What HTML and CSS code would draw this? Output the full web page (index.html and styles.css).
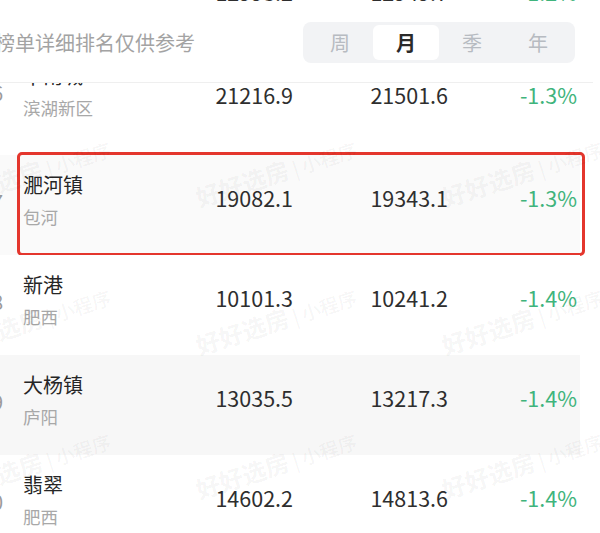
FILE: index.html
```html
<!DOCTYPE html>
<html lang="zh-CN">
<head>
    <meta charset="UTF-8">
    <meta name="viewport" content="width=device-width, initial-scale=1.0">
    <title>榜单详细排名</title>
    <link rel="stylesheet" href="styles.css">
</head>
<body>
    <!-- row scrolled away under the header -->
    <div class="peek">
        <div class="row shift-peek">
            <div class="name-cell"></div>
            <div class="num">12993.2</div>
            <div class="num">12949.7</div>
            <div class="pct">-1.2%</div>
        </div>
    </div>

    <div class="header">
        <div class="tip">榜单详细排名仅供参考</div>
        <div class="tabs">
            <span class="tab">周</span>
            <span class="tab active">月</span>
            <span class="tab">季</span>
            <span class="tab">年</span>
        </div>
    </div>

    <div class="rows">
        <div class="cut">
            <div class="row shift-cut">
                <div class="name-cell lift"><span class="rank">6</span><div><div class="name">华南城</div><div class="area">滨湖新区</div></div></div>
                <div class="num">21216.9</div>
                <div class="num">21501.6</div>
                <div class="pct">-1.3%</div>
            </div>
        </div>

        <div class="row shade-light">
            <div class="name-cell"><span class="rank">7</span><div><div class="name">淝河镇</div><div class="area">包河</div></div></div>
            <div class="num">19082.1</div>
            <div class="num">19343.1</div>
            <div class="pct">-1.3%</div>
            <div class="highlight"></div>
        </div>

        <div class="row">
            <div class="name-cell"><span class="rank">8</span><div><div class="name">新港</div><div class="area">肥西</div></div></div>
            <div class="num">10101.3</div>
            <div class="num">10241.2</div>
            <div class="pct">-1.4%</div>
        </div>

        <div class="row shade">
            <div class="name-cell"><span class="rank">9</span><div><div class="name">大杨镇</div><div class="area">庐阳</div></div></div>
            <div class="num">13035.5</div>
            <div class="num">13217.3</div>
            <div class="pct">-1.4%</div>
        </div>

        <div class="row">
            <div class="name-cell"><span class="rank">0</span><div><div class="name">翡翠</div><div class="area">肥西</div></div></div>
            <div class="num">14602.2</div>
            <div class="num">14813.6</div>
            <div class="pct">-1.4%</div>
        </div>

        <!-- watermark tiles -->
        <div class="marks">
            <span class="mark band-a col-a"><b>好好选房</b> | 小程序</span>
            <span class="mark band-a col-b"><b>好好选房</b> | 小程序</span>
            <span class="mark band-a col-c"><b>好好选房</b> | 小程序</span>
            <span class="mark band-b col-a"><b>好好选房</b> | 小程序</span>
            <span class="mark band-b col-b"><b>好好选房</b> | 小程序</span>
            <span class="mark band-b col-c"><b>好好选房</b> | 小程序</span>
            <span class="mark band-c col-a"><b>好好选房</b> | 小程序</span>
            <span class="mark band-c col-b"><b>好好选房</b> | 小程序</span>
            <span class="mark band-c col-c"><b>好好选房</b> | 小程序</span>
        </div>
    </div>
</body>
</html>
```

FILE: styles.css
```css
/* Basic Styles */
body {
    margin: 0;
    width: 600px;
    height: 533px;
    overflow: hidden;
    background-color: #fff;
    font-family: "Noto Sans CJK SC", "Noto Sans", sans-serif;
    color: #2b2b2b;
}

/* Partly hidden rows */
.peek {
    height: 9px;
    overflow: hidden;
}

.shift-peek {
    margin-top: -51px;
}

.cut {
    height: 72px;
    overflow: hidden;
}

.shift-cut {
    margin-top: -31px;
}

.lift {
    margin-top: -6px;
}

/* Header */
.header {
    width: 593px;
    height: 74px;
    display: flex;
    align-items: center;
    justify-content: space-between;
    padding: 0 18px 6px 0;
    box-sizing: border-box;
    border-bottom: 1px solid #efefef;
}

.tip {
    margin-left: -5px;
    font-size: 20px;
    color: #a3a3a3;
}

.tabs {
    display: flex;
    padding: 3px 4px;
    background-color: #f2f3f5;
    border-radius: 8px;
}

.tab {
    width: 66px;
    height: 35px;
    line-height: 35px;
    text-align: center;
    font-size: 20px;
    color: #b7bbc1;
}

.tab.active {
    background-color: #fff;
    border-radius: 6px;
    color: #2a2a2a;
    font-weight: 600;
}

/* List rows */
.rows {
    position: relative;
}

.row {
    position: relative;
    width: 580px;
    height: 100px;
    box-sizing: border-box;
    padding: 16px 3px 0 23px;
    display: grid;
    grid-template-columns: 1fr 95px 155px 129px;
    align-items: start;
    background-color: #fff;
}

.shade-light {
    background-color: #fafafa;
}

.shade {
    background-color: #f7f7f7;
}

.name-cell {
    display: flex;
    align-items: center;
}

.rank {
    width: 12px;
    margin-left: -32px;
    margin-right: 20px;
    font-size: 20px;
    color: #9a9a9a;
    text-align: right;
}

.name {
    font-size: 20px;
    line-height: 28px;
    color: #262626;
}

.area {
    margin-top: 4px;
    font-size: 17.5px;
    line-height: 28px;
    color: #a8a8a8;
}

.num,
.pct {
    margin-top: 13px;
    font-size: 21.5px;
    line-height: 28px;
    text-align: right;
}

.num {
    color: #2e2e2e;
}

.pct {
    color: #3fb47c;
}

/* Red annotation box */
.highlight {
    position: absolute;
    left: 17px;
    right: -5px;
    top: -3px;
    bottom: -1px;
    border: 3px solid #e4362d;
    border-radius: 5px;
}

/* Watermark */
.marks {
    position: absolute;
    inset: 0;
    pointer-events: none;
}

.mark {
    position: absolute;
    white-space: nowrap;
    line-height: 28px;
    font-size: 19px;
    font-weight: 500;
    color: rgba(0, 0, 0, 0.05);
    transform: rotate(-18deg);
    transform-origin: left center;
}

.mark b {
    font-size: 24px;
    font-weight: 700;
}

.band-a { top: 101px; }
.band-b { top: 249px; }
.band-c { top: 393px; }

.col-a { left: -49px; }
.col-b { left: 197px; }
.col-c { left: 443px; }
```
